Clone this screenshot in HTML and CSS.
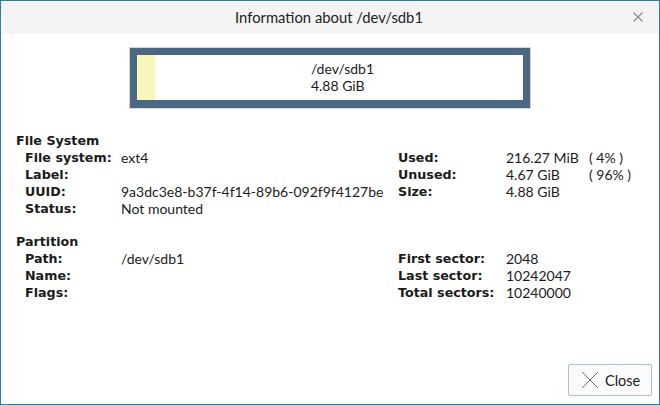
FILE: index.html
```html
<!DOCTYPE html>
<html>
<head>
<meta charset="utf-8">
<link rel="stylesheet" href="styles.css">
</head>
<body>
<div class="window">
  <div class="titlebar">
    <div class="title">Information about /dev/sdb1</div>
    <svg class="title-close" width="10" height="10" viewBox="0 0 10 10"><path d="M0.5 0.5 L9.5 9.5 M9.5 0.5 L0.5 9.5" stroke="#8a8a8a" stroke-width="1.1" fill="none"/></svg>
  </div>
  <div class="content">
    <div class="partbar">
      <div class="partbar-inner">
        <div class="used"></div>
        <div class="partlabel">
          <div class="partlabel-text">
            <div class="pl-line">/dev/sdb1</div>
            <div class="pl-line">4.88 GiB</div>
          </div>
        </div>
      </div>
    </div>

    <div class="section">
      <div class="heading">File System</div>
      <div class="grid">
        <div class="lbl">File system:</div><div class="val">ext4</div>
        <div class="lbl">Used:</div><div class="val">216.27 MiB</div><div class="pct">( 4% )</div>
        <div class="lbl">Label:</div><div class="val"></div>
        <div class="lbl">Unused:</div><div class="val">4.67 GiB</div><div class="pct">( 96% )</div>
        <div class="lbl">UUID:</div><div class="val">9a3dc3e8-b37f-4f14-89b6-092f9f4127be</div>
        <div class="lbl">Size:</div><div class="val">4.88 GiB</div><div class="pct"></div>
        <div class="lbl">Status:</div><div class="val">Not mounted</div>
        <div class="lbl"></div><div class="val"></div><div class="pct"></div>
      </div>
    </div>

    <div class="section section2">
      <div class="heading">Partition</div>
      <div class="grid">
        <div class="lbl">Path:</div><div class="val">/dev/sdb1</div>
        <div class="lbl">First sector:</div><div class="val">2048</div><div class="pct"></div>
        <div class="lbl">Name:</div><div class="val"></div>
        <div class="lbl">Last sector:</div><div class="val">10242047</div><div class="pct"></div>
        <div class="lbl">Flags:</div><div class="val"></div>
        <div class="lbl">Total sectors:</div><div class="val">10240000</div><div class="pct"></div>
      </div>
    </div>
  </div>
  <div class="footer">
    <button class="btn">
      <svg width="18" height="18" viewBox="0 0 18 18"><path d="M1 1 L17 17 M17 1 L1 17" stroke="#6e6e6e" stroke-width="1" fill="none"/></svg>
      <span>Close</span>
    </button>
  </div>
</div>
</body>
</html>
```
FILE: styles.css
```css
html, body {
  margin: 0;
  padding: 0;
  background: #ffffff;
}
body {
  font-family: "Lato", "Open Sans", sans-serif;
  font-size: 14px;
  color: #1b1b1b;
}
.window {
  width: 660px;
  height: 405px;
  box-sizing: border-box;
  border: 1px solid #2b7ea7;
  display: flex;
  flex-direction: column;
  background: #ffffff;
}
.titlebar {
  height: 33px;
  background: #f4f4f5;
  position: relative;
  display: flex;
  align-items: center;
  justify-content: center;
}
.title {
  font-size: 14.8px;
  color: #222;
  margin-top: -1px;
  margin-right: 2px;
}
.title-close {
  position: absolute;
  right: 16px;
  top: 11px;
}
.content {
  flex: 1;
  padding: 13px 0 0 14px;
}
.partbar {
  width: 402px;
  height: 62px;
  box-sizing: border-box;
  border: 1px solid #d6d6d6;
  margin-left: 114px;
}
.partbar-inner {
  height: 100%;
  box-sizing: border-box;
  border: 7px solid #4b6882;
  border-bottom-width: 8px;
  background: #fff;
  display: flex;
}
.used {
  width: 18px;
  background: #f7f7bb;
}
.partlabel {
  flex: 1;
  display: flex;
  align-items: center;
  justify-content: center;
}
.partlabel-text {
  margin-left: 7px;
  margin-top: -1px;
}
.pl-line {
  height: 17px;
  line-height: 17px;
  white-space: nowrap;
}
.section {
  margin-top: 23px;
  line-height: 17px;
}
.section2 {
  margin-top: 16px;
}
.heading {
  font-family: "DejaVu Sans", sans-serif;
  font-size: 12.7px;
  font-weight: bold;
  margin-left: 1px;
}
.grid {
  display: grid;
  grid-template-columns: 96px 277px 108px 83px 60px;
  grid-auto-rows: 17px;
  padding-left: 10px;
}
.grid .lbl {
  font-family: "DejaVu Sans", sans-serif;
  font-size: 12.7px;
  font-weight: bold;
  white-space: nowrap;
}
.grid .val {
  white-space: nowrap;
}
.grid > :nth-child(5n+3) {
  grid-column: 3;
}
.pct {
  white-space: nowrap;
}
.footer {
  display: flex;
  justify-content: flex-end;
  padding: 0 7px 8px 0;
}
.btn {
  width: 84px;
  height: 32px;
  box-sizing: border-box;
  border: 1px solid #a7c0cc;
  background: #fbfbfb;
  border-radius: 2px;
  display: flex;
  align-items: center;
  padding: 0 0 0 12px;
  font-family: "Lato", "Open Sans", sans-serif;
  font-size: 14.5px;
  color: #1b1b1b;
  gap: 6px;
}
```
